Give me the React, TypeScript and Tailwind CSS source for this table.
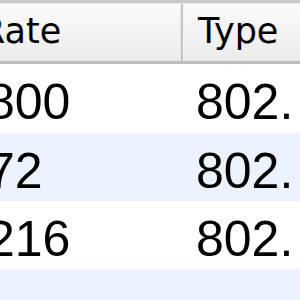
import React from "react";

const rows = [
  { rate: "800", type: "802.", bg: "bg-white", h: "h-[69px]" },
  { rate: "72", type: "802.", bg: "bg-[#edf3fe]", h: "h-[68px]" },
  { rate: "216", type: "802.", bg: "bg-white", h: "h-[68px]" },
  { rate: "", type: "", bg: "bg-[#edf3fe]", h: "h-[40px]" },
];

export default function App() {
  return (
    <div className="w-[300px] h-[300px] overflow-hidden bg-white flex flex-col">
      {/* header */}
      <div className="h-[64px] shrink-0 flex flex-col">
        <div className="h-[3px] bg-[#c9c9c9]" />
        <div className="h-[1px] bg-[#e6e6e6]" />
        <div className="flex-1 flex bg-gradient-to-b from-[#fbfbfb] via-[#f3f3f3] to-[#ebebeb]">
          <div className="w-[180px] overflow-hidden pt-[10px]">
            <div
              className="ml-[-19px] text-[35px] leading-[35px] text-black whitespace-nowrap"
              style={{ fontFamily: '"DejaVu Sans", sans-serif' }}
            >
              Rate
            </div>
          </div>
          <div className="w-[1px] bg-[#e8e8e8]" />
          <div className="w-[2px] bg-[#c4c4c4]" />
          <div className="w-[1px] bg-[#f6f6f6]" />
          <div className="flex-1 overflow-hidden pt-[10px] pl-[14px]">
            <div
              className="text-[35px] leading-[35px] text-black whitespace-nowrap"
              style={{ fontFamily: '"DejaVu Sans", sans-serif' }}
            >
              Type
            </div>
          </div>
        </div>
        <div className="h-[3px] bg-[#bdbdbd]" />
      </div>
      {/* rows */}
      {rows.map((r, i) => (
        <div key={i} className={`${r.bg} ${r.h} shrink-0 flex`}>
          <div className="w-[184px] overflow-hidden pt-[13px]">
            <div
              className="ml-[-13px] text-[50px] leading-[50px] text-black whitespace-nowrap"
              style={{ fontFamily: '"Liberation Sans", Arial, sans-serif' }}
            >
              {r.rate}
            </div>
          </div>
          <div className="flex-1 overflow-hidden pt-[13px] pl-[12px]">
            <div
              className="text-[50px] leading-[50px] text-black whitespace-nowrap"
              style={{ fontFamily: '"Liberation Sans", Arial, sans-serif' }}
            >
              {r.type}
            </div>
          </div>
        </div>
      ))}
    </div>
  );
}
